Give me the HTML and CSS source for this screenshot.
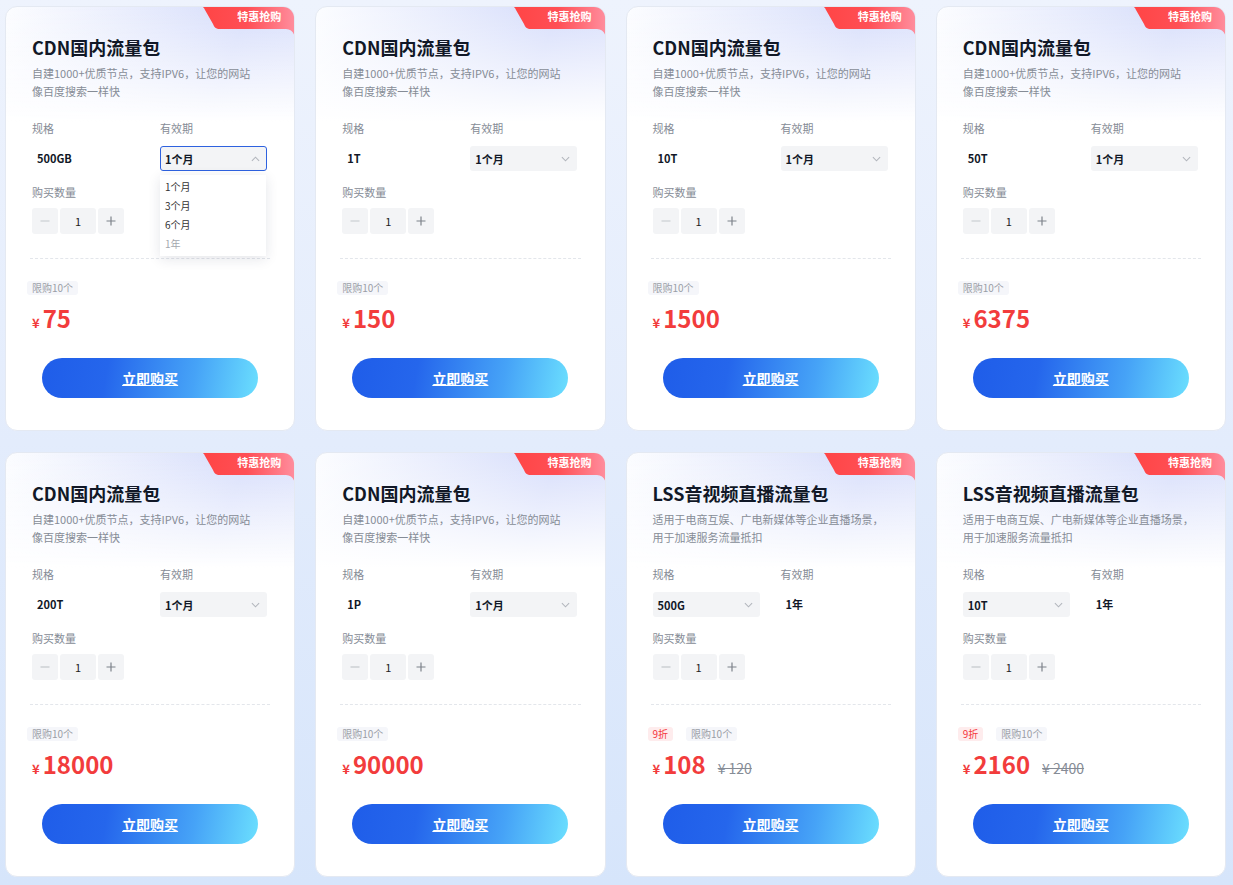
FILE: index.html
```html
<!DOCTYPE html>
<html lang="zh-CN">
<head>
  <meta charset="UTF-8" />
  <meta name="viewport" content="width=device-width, initial-scale=1.0" />
  <title>流量包</title>
  <link rel="stylesheet" href="styles.css">
</head>
<body>
  <div class="package-list">

    <!-- 1 -->
    <div class="package-card">
      <div class="badge">
        <svg viewBox="0 0 96 34" width="96" height="34"><path d="M0,0 H96 V34 C96,28 93,23 87,23 H21 C17,23 15,21 14,18 L6,4 C5,1 3,0 0,0 Z" fill="url(#badgeGrad)"/></svg>
        <span>特惠抢购</span>
      </div>
      <h3 class="title">CDN国内流量包</h3>
      <p class="desc">自建1000+优质节点，支持IPV6，让您的网站<br>像百度搜索一样快</p>
      <div class="options">
        <div class="field">
          <div class="label">规格</div>
          <div class="value">500GB</div>
        </div>
        <div class="field">
          <div class="label">有效期</div>
          <div class="select open">
            <div class="select-box">1个月<svg class="chev" viewBox="0 0 10 6" width="9" height="6"><path d="M1,5 L5,1 L9,5" /></svg></div>
            <ul class="dropdown">
              <li>1个月</li>
              <li>3个月</li>
              <li>6个月</li>
              <li class="disabled">1年</li>
            </ul>
          </div>
        </div>
      </div>
      <div class="label">购买数量</div>
      <div class="stepper">
        <button class="step minus"><svg viewBox="0 0 10 10" width="10" height="10"><path d="M0.5,5 H9.5" /></svg></button>
        <span class="qty">1</span>
        <button class="step plus"><svg viewBox="0 0 10 10" width="10" height="10"><path d="M0.5,5 H9.5 M5,0.5 V9.5" /></svg></button>
      </div>
      <div class="divider"></div>
      <div class="tags"><span class="tag">限购10个</span></div>
      <div class="price"><span class="currency">¥</span><span class="amount">75</span></div>
      <a class="buy-btn" href="#">立即购买</a>
    </div>

    <!-- 2 -->
    <div class="package-card">
      <div class="badge">
        <svg viewBox="0 0 96 34" width="96" height="34"><path d="M0,0 H96 V34 C96,28 93,23 87,23 H21 C17,23 15,21 14,18 L6,4 C5,1 3,0 0,0 Z" fill="url(#badgeGrad)"/></svg>
        <span>特惠抢购</span>
      </div>
      <h3 class="title">CDN国内流量包</h3>
      <p class="desc">自建1000+优质节点，支持IPV6，让您的网站<br>像百度搜索一样快</p>
      <div class="options">
        <div class="field">
          <div class="label">规格</div>
          <div class="value">1T</div>
        </div>
        <div class="field">
          <div class="label">有效期</div>
          <div class="select">
            <div class="select-box">1个月<svg class="chev" viewBox="0 0 10 6" width="9" height="6"><path d="M1,1 L5,5 L9,1" /></svg></div>
          </div>
        </div>
      </div>
      <div class="label">购买数量</div>
      <div class="stepper">
        <button class="step minus"><svg viewBox="0 0 10 10" width="10" height="10"><path d="M0.5,5 H9.5" /></svg></button>
        <span class="qty">1</span>
        <button class="step plus"><svg viewBox="0 0 10 10" width="10" height="10"><path d="M0.5,5 H9.5 M5,0.5 V9.5" /></svg></button>
      </div>
      <div class="divider"></div>
      <div class="tags"><span class="tag">限购10个</span></div>
      <div class="price"><span class="currency">¥</span><span class="amount">150</span></div>
      <a class="buy-btn" href="#">立即购买</a>
    </div>

    <!-- 3 -->
    <div class="package-card">
      <div class="badge">
        <svg viewBox="0 0 96 34" width="96" height="34"><path d="M0,0 H96 V34 C96,28 93,23 87,23 H21 C17,23 15,21 14,18 L6,4 C5,1 3,0 0,0 Z" fill="url(#badgeGrad)"/></svg>
        <span>特惠抢购</span>
      </div>
      <h3 class="title">CDN国内流量包</h3>
      <p class="desc">自建1000+优质节点，支持IPV6，让您的网站<br>像百度搜索一样快</p>
      <div class="options">
        <div class="field">
          <div class="label">规格</div>
          <div class="value">10T</div>
        </div>
        <div class="field">
          <div class="label">有效期</div>
          <div class="select">
            <div class="select-box">1个月<svg class="chev" viewBox="0 0 10 6" width="9" height="6"><path d="M1,1 L5,5 L9,1" /></svg></div>
          </div>
        </div>
      </div>
      <div class="label">购买数量</div>
      <div class="stepper">
        <button class="step minus"><svg viewBox="0 0 10 10" width="10" height="10"><path d="M0.5,5 H9.5" /></svg></button>
        <span class="qty">1</span>
        <button class="step plus"><svg viewBox="0 0 10 10" width="10" height="10"><path d="M0.5,5 H9.5 M5,0.5 V9.5" /></svg></button>
      </div>
      <div class="divider"></div>
      <div class="tags"><span class="tag">限购10个</span></div>
      <div class="price"><span class="currency">¥</span><span class="amount">1500</span></div>
      <a class="buy-btn" href="#">立即购买</a>
    </div>

    <!-- 4 -->
    <div class="package-card">
      <div class="badge">
        <svg viewBox="0 0 96 34" width="96" height="34"><path d="M0,0 H96 V34 C96,28 93,23 87,23 H21 C17,23 15,21 14,18 L6,4 C5,1 3,0 0,0 Z" fill="url(#badgeGrad)"/></svg>
        <span>特惠抢购</span>
      </div>
      <h3 class="title">CDN国内流量包</h3>
      <p class="desc">自建1000+优质节点，支持IPV6，让您的网站<br>像百度搜索一样快</p>
      <div class="options">
        <div class="field">
          <div class="label">规格</div>
          <div class="value">50T</div>
        </div>
        <div class="field">
          <div class="label">有效期</div>
          <div class="select">
            <div class="select-box">1个月<svg class="chev" viewBox="0 0 10 6" width="9" height="6"><path d="M1,1 L5,5 L9,1" /></svg></div>
          </div>
        </div>
      </div>
      <div class="label">购买数量</div>
      <div class="stepper">
        <button class="step minus"><svg viewBox="0 0 10 10" width="10" height="10"><path d="M0.5,5 H9.5" /></svg></button>
        <span class="qty">1</span>
        <button class="step plus"><svg viewBox="0 0 10 10" width="10" height="10"><path d="M0.5,5 H9.5 M5,0.5 V9.5" /></svg></button>
      </div>
      <div class="divider"></div>
      <div class="tags"><span class="tag">限购10个</span></div>
      <div class="price"><span class="currency">¥</span><span class="amount">6375</span></div>
      <a class="buy-btn" href="#">立即购买</a>
    </div>

    <!-- 5 -->
    <div class="package-card">
      <div class="badge">
        <svg viewBox="0 0 96 34" width="96" height="34"><path d="M0,0 H96 V34 C96,28 93,23 87,23 H21 C17,23 15,21 14,18 L6,4 C5,1 3,0 0,0 Z" fill="url(#badgeGrad)"/></svg>
        <span>特惠抢购</span>
      </div>
      <h3 class="title">CDN国内流量包</h3>
      <p class="desc">自建1000+优质节点，支持IPV6，让您的网站<br>像百度搜索一样快</p>
      <div class="options">
        <div class="field">
          <div class="label">规格</div>
          <div class="value">200T</div>
        </div>
        <div class="field">
          <div class="label">有效期</div>
          <div class="select">
            <div class="select-box">1个月<svg class="chev" viewBox="0 0 10 6" width="9" height="6"><path d="M1,1 L5,5 L9,1" /></svg></div>
          </div>
        </div>
      </div>
      <div class="label">购买数量</div>
      <div class="stepper">
        <button class="step minus"><svg viewBox="0 0 10 10" width="10" height="10"><path d="M0.5,5 H9.5" /></svg></button>
        <span class="qty">1</span>
        <button class="step plus"><svg viewBox="0 0 10 10" width="10" height="10"><path d="M0.5,5 H9.5 M5,0.5 V9.5" /></svg></button>
      </div>
      <div class="divider"></div>
      <div class="tags"><span class="tag">限购10个</span></div>
      <div class="price"><span class="currency">¥</span><span class="amount">18000</span></div>
      <a class="buy-btn" href="#">立即购买</a>
    </div>

    <!-- 6 -->
    <div class="package-card">
      <div class="badge">
        <svg viewBox="0 0 96 34" width="96" height="34"><path d="M0,0 H96 V34 C96,28 93,23 87,23 H21 C17,23 15,21 14,18 L6,4 C5,1 3,0 0,0 Z" fill="url(#badgeGrad)"/></svg>
        <span>特惠抢购</span>
      </div>
      <h3 class="title">CDN国内流量包</h3>
      <p class="desc">自建1000+优质节点，支持IPV6，让您的网站<br>像百度搜索一样快</p>
      <div class="options">
        <div class="field">
          <div class="label">规格</div>
          <div class="value">1P</div>
        </div>
        <div class="field">
          <div class="label">有效期</div>
          <div class="select">
            <div class="select-box">1个月<svg class="chev" viewBox="0 0 10 6" width="9" height="6"><path d="M1,1 L5,5 L9,1" /></svg></div>
          </div>
        </div>
      </div>
      <div class="label">购买数量</div>
      <div class="stepper">
        <button class="step minus"><svg viewBox="0 0 10 10" width="10" height="10"><path d="M0.5,5 H9.5" /></svg></button>
        <span class="qty">1</span>
        <button class="step plus"><svg viewBox="0 0 10 10" width="10" height="10"><path d="M0.5,5 H9.5 M5,0.5 V9.5" /></svg></button>
      </div>
      <div class="divider"></div>
      <div class="tags"><span class="tag">限购10个</span></div>
      <div class="price"><span class="currency">¥</span><span class="amount">90000</span></div>
      <a class="buy-btn" href="#">立即购买</a>
    </div>

    <!-- 7 -->
    <div class="package-card">
      <div class="badge">
        <svg viewBox="0 0 96 34" width="96" height="34"><path d="M0,0 H96 V34 C96,28 93,23 87,23 H21 C17,23 15,21 14,18 L6,4 C5,1 3,0 0,0 Z" fill="url(#badgeGrad)"/></svg>
        <span>特惠抢购</span>
      </div>
      <h3 class="title">LSS音视频直播流量包</h3>
      <p class="desc">适用于电商互娱、广电新媒体等企业直播场景，<br>用于加速服务流量抵扣</p>
      <div class="options">
        <div class="field">
          <div class="label">规格</div>
          <div class="select">
            <div class="select-box">500G<svg class="chev" viewBox="0 0 10 6" width="9" height="6"><path d="M1,1 L5,5 L9,1" /></svg></div>
          </div>
        </div>
        <div class="field">
          <div class="label">有效期</div>
          <div class="value">1年</div>
        </div>
      </div>
      <div class="label">购买数量</div>
      <div class="stepper">
        <button class="step minus"><svg viewBox="0 0 10 10" width="10" height="10"><path d="M0.5,5 H9.5" /></svg></button>
        <span class="qty">1</span>
        <button class="step plus"><svg viewBox="0 0 10 10" width="10" height="10"><path d="M0.5,5 H9.5 M5,0.5 V9.5" /></svg></button>
      </div>
      <div class="divider"></div>
      <div class="tags"><span class="tag discount">9折</span><span class="tag">限购10个</span></div>
      <div class="price"><span class="currency">¥</span><span class="amount">108</span><span class="origin">¥ 120</span></div>
      <a class="buy-btn" href="#">立即购买</a>
    </div>

    <!-- 8 -->
    <div class="package-card">
      <div class="badge">
        <svg viewBox="0 0 96 34" width="96" height="34"><path d="M0,0 H96 V34 C96,28 93,23 87,23 H21 C17,23 15,21 14,18 L6,4 C5,1 3,0 0,0 Z" fill="url(#badgeGrad)"/></svg>
        <span>特惠抢购</span>
      </div>
      <h3 class="title">LSS音视频直播流量包</h3>
      <p class="desc">适用于电商互娱、广电新媒体等企业直播场景，<br>用于加速服务流量抵扣</p>
      <div class="options">
        <div class="field">
          <div class="label">规格</div>
          <div class="select">
            <div class="select-box">10T<svg class="chev" viewBox="0 0 10 6" width="9" height="6"><path d="M1,1 L5,5 L9,1" /></svg></div>
          </div>
        </div>
        <div class="field">
          <div class="label">有效期</div>
          <div class="value">1年</div>
        </div>
      </div>
      <div class="label">购买数量</div>
      <div class="stepper">
        <button class="step minus"><svg viewBox="0 0 10 10" width="10" height="10"><path d="M0.5,5 H9.5" /></svg></button>
        <span class="qty">1</span>
        <button class="step plus"><svg viewBox="0 0 10 10" width="10" height="10"><path d="M0.5,5 H9.5 M5,0.5 V9.5" /></svg></button>
      </div>
      <div class="divider"></div>
      <div class="tags"><span class="tag discount">9折</span><span class="tag">限购10个</span></div>
      <div class="price"><span class="currency">¥</span><span class="amount">2160</span><span class="origin">¥ 2400</span></div>
      <a class="buy-btn" href="#">立即购买</a>
    </div>

  </div>

  <!-- shared gradient for the ribbons -->
  <svg width="0" height="0" class="defs">
    <defs>
      <linearGradient id="badgeGrad" x1="0" y1="0" x2="1" y2="0">
        <stop offset="0" stop-color="#ff4444" />
        <stop offset="0.5" stop-color="#ff4f55" />
        <stop offset="1" stop-color="#ff8e9e" />
      </linearGradient>
    </defs>
  </svg>
</body>
</html>
```

FILE: styles.css
```css
* {
  margin: 0;
  padding: 0;
  box-sizing: border-box;
}
html, body {
  width: 100%;
  min-height: 100%;
}
body {
  background: linear-gradient(180deg, #eef3fd 0%, #e3ecfc 50%, #d6e5fb 100%);
  font-family: "Noto Sans CJK SC", "Noto Sans", sans-serif;
  color: #1d2129;
}
.defs {
  position: absolute;
}
.package-list {
  display: grid;
  grid-template-columns: repeat(4, 1fr);
  gap: 21px 20px;
  padding: 6px 7px 8px 5px;
}
.package-card {
  position: relative;
  overflow: hidden;
  background-color: #fff;
  background-image:
    linear-gradient(180deg, rgba(255, 255, 255, 0) 0, #fff 115px),
    linear-gradient(110deg, #fcfdff 0%, #d6ddfb 55%, #e5e9fd 100%);
  border: 1px solid #e4e9f2;
  border-radius: 12px;
  padding: 27px 26px 32px 26px;
}
.badge {
  position: absolute;
  top: -1px;
  right: -1px;
  width: 96px;
  height: 34px;
}
.badge svg {
  position: absolute;
  top: 0;
  left: 0;
}
.badge span {
  position: relative;
  display: block;
  text-align: right;
  padding-right: 14px;
  line-height: 21px;
  font-size: 11px;
  font-weight: 700;
  color: #fff;
}
.title {
  font-size: 18px;
  line-height: 26px;
  font-weight: 700;
  color: #111827;
  margin-bottom: 4px;
}
.desc {
  font-size: 11px;
  line-height: 18px;
  color: #868c96;
  height: 36px;
  white-space: nowrap;
}
.options {
  display: grid;
  grid-template-columns: 107px 107px;
  column-gap: 21px;
  margin-top: 20px;
  margin-bottom: 13px;
}
.label {
  font-size: 11px;
  line-height: 16px;
  color: #868c96;
  margin-bottom: 10px;
}
.options + .label {
  margin-bottom: 8px;
}
.value {
  height: 25px;
  line-height: 25px;
  padding-left: 5px;
  font-size: 11px;
  font-weight: 700;
  color: #111827;
}
.select {
  position: relative;
}
.select-box {
  height: 25px;
  display: flex;
  align-items: center;
  justify-content: space-between;
  padding: 0 6px 0 4px;
  background: #f3f4f6;
  border: 1px solid transparent;
  border-radius: 3px;
  font-size: 11px;
  font-weight: 700;
  color: #111827;
}
.select.open .select-box {
  border-color: #2e62df;
}
.chev path {
  fill: none;
  stroke: #b2b6bd;
  stroke-width: 1.2;
}
.dropdown {
  position: absolute;
  top: 29px;
  left: 0;
  width: 106px;
  padding: 2px 0 3px;
  list-style: none;
  background: #fff;
  box-shadow: 0 3px 12px rgba(30, 40, 70, 0.12);
  z-index: 2;
}
.dropdown li {
  padding-left: 5px;
  font-size: 10px;
  line-height: 19px;
  color: #333;
}
.dropdown li.disabled {
  color: #a3a7ae;
}
.stepper {
  display: flex;
  gap: 2px;
}
.step,
.qty {
  height: 26px;
  background: #f3f4f6;
  border: none;
  border-radius: 3px;
}
.step {
  width: 26px;
  display: flex;
  align-items: center;
  justify-content: center;
}
.step path {
  fill: none;
  stroke-width: 1.2;
}
.minus path {
  stroke: #c4c7cc;
}
.plus path {
  stroke: #7d828a;
}
.qty {
  width: 36px;
  line-height: 26px;
  text-align: center;
  font-size: 11px;
  color: #222;
}
.divider {
  margin: 24px -2px 0;
  border-top: 1px dashed #e3e6eb;
}
.tags {
  display: flex;
  gap: 13px;
  margin: 22px 0 0 -5px;
}
.tag {
  height: 14px;
  line-height: 14px;
  padding: 0 5px;
  font-size: 10px;
  color: #9a9ea6;
  background: #f5f6fa;
  border-radius: 3px;
}
.tag.discount {
  color: #f5393f;
  background: #feeced;
}
.price {
  display: flex;
  align-items: baseline;
  height: 30px;
  margin-top: 8px;
  color: #f23c3c;
}
.currency {
  font-size: 13px;
  font-weight: 700;
  margin-right: 3px;
}
.amount {
  font-size: 24px;
  line-height: 30px;
  font-weight: 700;
}
.origin {
  margin-left: 12px;
  font-size: 14px;
  color: #868c96;
  text-decoration: line-through;
}
.buy-btn {
  display: block;
  width: 216px;
  height: 40px;
  margin: 25px auto 0;
  border-radius: 20px;
  background: linear-gradient(100deg, #1f5de9 0%, #2566ec 30%, #46a3f7 70%, #6bdffe 100%);
  color: #fff;
  font-size: 14px;
  font-weight: 700;
  line-height: 40px;
  text-align: center;
  text-decoration: underline;
}
```
